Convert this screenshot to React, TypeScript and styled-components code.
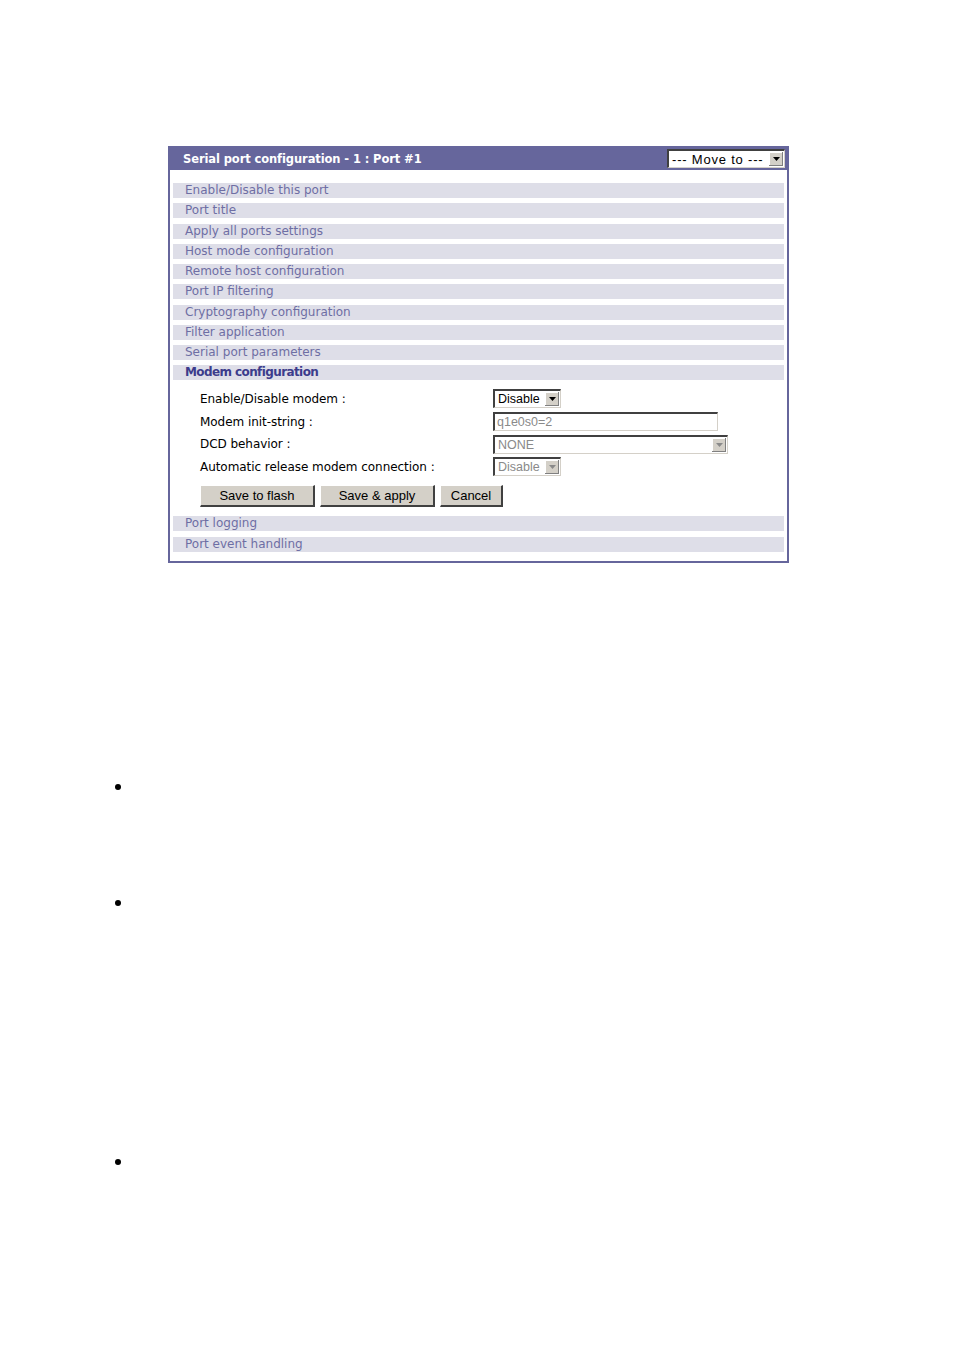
import * as React from 'react'
import styled, { createGlobalStyle } from 'styled-components'

const GlobalStyle = createGlobalStyle`
  body {
    margin: 0;
    background: #fff;
    font-family: "DejaVu Sans", Verdana, sans-serif;
  }
`

const sections = [
  'Enable/Disable this port',
  'Port title',
  'Apply all ports settings',
  'Host mode configuration',
  'Remote host configuration',
  'Port IP filtering',
  'Cryptography configuration',
  'Filter application',
  'Serial port parameters',
]

const after = ['Port logging', 'Port event handling']

const Arrow: React.FC<{ disabled?: boolean }> = ({ disabled }) => (
  <ArrowBox>
    <svg width="7" height="4" viewBox="0 0 7 4">
      <path d="M0 0h7L3.5 4z" fill={disabled ? '#8a8a8a' : '#000'} />
    </svg>
  </ArrowBox>
)

const App: React.FC = () => {
  return (
    <Page>
      <GlobalStyle />
      <Panel>
        <Header>
          <Title>Serial port configuration - 1 : Port #1</Title>
          <MoveTo>
            <MoveText>--- Move to ---</MoveText>
            <Arrow />
          </MoveTo>
        </Header>
        <Body>
          {sections.map((s) => (
            <Section key={s}>{s}</Section>
          ))}
          <Section $active>Modem configuration</Section>
          <Form>
            <Label>Enable/Disable modem :</Label>
            <Select $width={68}>
              <SelectText>Disable</SelectText>
              <Arrow />
            </Select>
            <Label>Modem init-string :</Label>
            <TextInput>q1e0s0=2</TextInput>
            <Label>DCD behavior :</Label>
            <Select $width={235} $disabled>
              <SelectText>NONE</SelectText>
              <Arrow disabled />
            </Select>
            <Label>Automatic release modem connection :</Label>
            <Select $width={68} $disabled>
              <SelectText>Disable</SelectText>
              <Arrow disabled />
            </Select>
          </Form>
          <Buttons>
            <Button $width={115}>Save to flash</Button>
            <Button $width={115}>Save &amp; apply</Button>
            <Button $width={63}>Cancel</Button>
          </Buttons>
          {after.map((s) => (
            <Section key={s}>{s}</Section>
          ))}
        </Body>
      </Panel>
      <Bullets>
        <Bullet $top={221} />
        <Bullet $top={110} />
        <Bullet $top={253} />
      </Bullets>
    </Page>
  )
}

const Page = styled.div`
  padding: 146px 0 0 168px;
  min-height: 1351px;
  box-sizing: border-box;
`

const Panel = styled.div`
  width: 621px;
  box-sizing: border-box;
  border: 2px solid #66669c;
  border-top-width: 1px;
`

const Header = styled.div`
  height: 23px;
  background: #66669c;
  display: flex;
  align-items: center;
  justify-content: space-between;
  padding: 0 2px 0 13px;
`

const Title = styled.span`
  color: #fff;
  font-weight: bold;
  font-size: 11.5px;
  letter-spacing: -0.1px;
  font-family: "DejaVu Sans", Verdana, sans-serif;
`

const Body = styled.div`
  padding: 13px 3px 4px 3px;
`

const Section = styled.div<{ $active?: boolean }>`
  height: 15px;
  line-height: 15px;
  margin-bottom: 5.25px;
  background: #dedee8;
  padding-left: 12px;
  font-size: 12px;
  color: ${(p) => (p.$active ? '#3c3c8c' : '#6e6ea4')};
  font-weight: ${(p) => (p.$active ? 'bold' : 'normal')};
  letter-spacing: ${(p) => (p.$active ? '-0.6px' : '0')};
  white-space: nowrap;
`

const Form = styled.div`
  display: grid;
  grid-template-columns: 293px 1fr;
  grid-auto-rows: 22.7px;
  align-items: center;
  padding: 2px 0 0 27px;
`

const Label = styled.span`
  font-size: 12px;
  color: #000;
  font-family: "DejaVu Sans", Verdana, sans-serif;
  letter-spacing: -0.05px;
`

const Select = styled.div<{ $width: number; $disabled?: boolean }>`
  width: ${(p) => p.$width}px;
  height: 19px;
  box-sizing: border-box;
  display: flex;
  align-items: center;
  justify-content: space-between;
  background: #fff;
  border-top: 2px solid #404040;
  border-left: 2px solid #404040;
  border-right: 1px solid #d4d0c8;
  border-bottom: 1px solid #d4d0c8;
  color: ${(p) => (p.$disabled ? '#8a8a8a' : '#000')};
`

const MoveTo = styled(Select).attrs({ $width: 118 })`
  height: 19px;
`

const SelectText = styled.span`
  font-family: "Liberation Sans", Arial, sans-serif;
  font-size: 12.5px;
  padding-left: 3px;
  white-space: nowrap;
`

const MoveText = styled(SelectText)`
  font-size: 13px;
  letter-spacing: 0.8px;
`

const ArrowBox = styled.span`
  width: 14px;
  height: 14px;
  margin-right: 1px;
  background: #d4d0c8;
  display: flex;
  align-items: center;
  justify-content: center;
  box-shadow: inset -1px -1px #808080, inset 1px 1px #fff;
`

const TextInput = styled.div`
  width: 225px;
  height: 19px;
  box-sizing: border-box;
  border-top: 2px solid #404040;
  border-left: 2px solid #404040;
  border-right: 1px solid #d4d0c8;
  border-bottom: 1px solid #d4d0c8;
  font-family: "Liberation Sans", Arial, sans-serif;
  font-size: 12.5px;
  color: #8a8a8a;
  padding-left: 2px;
  line-height: 16px;
`

const Buttons = styled.div`
  display: flex;
  gap: 5px;
  padding: 7px 0 9px 27px;
`

const Button = styled.div<{ $width: number }>`
  width: ${(p) => p.$width}px;
  height: 22px;
  box-sizing: border-box;
  background: #d4d0c8;
  border-top: 1px solid #fff;
  border-left: 1px solid #fff;
  border-right: 2px solid #404040;
  border-bottom: 2px solid #404040;
  font-family: "Liberation Sans", Arial, sans-serif;
  font-size: 13px;
  display: flex;
  align-items: center;
  justify-content: center;
  color: #000;
`

const Bullets = styled.div`
  display: flex;
  flex-direction: column;
  margin-left: -53px;
`

const Bullet = styled.div<{ $top: number }>`
  width: 6px;
  height: 6px;
  border-radius: 50%;
  background: #000;
  margin-top: ${(p) => p.$top}px;
`

export default App
